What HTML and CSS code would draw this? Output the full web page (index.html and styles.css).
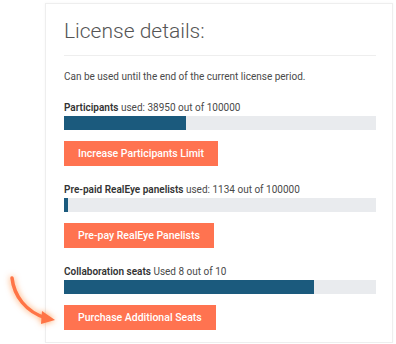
FILE: index.html
```html
<!DOCTYPE html>
<html lang="en">
<head>
    <meta charset="UTF-8">
    <meta name="viewport" content="width=device-width, initial-scale=1.0">
    <title>License details</title>
    <link rel="stylesheet" href="styles.css">
</head>
<body>

    <div class="page">
        <svg class="arrow" width="60" height="60" viewBox="0 0 60 60">
            <path d="M12 16 C14 34 26 50 46 56" fill="none" stroke="#ff7446" stroke-width="3.5" stroke-linecap="round"/>
            <path d="M42 49 L55 58 L41 62 Z" fill="#ff7446"/>
        </svg>

        <div class="card">
            <h1>License details:</h1>
            <p class="note">Can be used until the end of the current license period.</p>

            <div class="limit">
                <div class="label"><b>Participants</b> used: 38950 out of 100000</div>
                <div class="bar"><div class="fill" style="width: 38.95%"></div></div>
                <button>Increase Participants Limit</button>
            </div>

            <div class="limit">
                <div class="label"><b>Pre-paid RealEye panelists</b> used: 1134 out of 100000</div>
                <div class="bar"><div class="fill" style="width: 1.134%"></div></div>
                <button>Pre-pay RealEye Panelists</button>
            </div>

            <div class="limit">
                <div class="label"><b>Collaboration seats</b> Used 8 out of 10</div>
                <div class="bar"><div class="fill" style="width: 80%"></div></div>
                <button>Purchase Additional Seats</button>
            </div>
        </div>
    </div>

</body>
</html>
```

FILE: styles.css
```css
body {
    margin: 0;
    background: #ffffff;
    font-family: 'Roboto', 'Liberation Sans', sans-serif;
    color: #4a4a4a;
}

.page {
    position: relative;
    padding: 3px 3px 0 45px;
}

.card {
    border: 1px solid #eeeeee;
    padding: 15px 16px 12px 18px;
    height: 340px;
    box-sizing: border-box;
    box-shadow: 0 0 3px rgba(0, 0, 0, 0.04);
}

h1 {
    margin: 0;
    font-size: 21px;
    font-weight: 300;
    color: #555;
    padding-bottom: 12px;
    border-bottom: 1px solid #eeeeee;
}

.note {
    margin: 15px 0 19px;
    font-size: 10px;
}

.limit {
    margin-bottom: 17px;
}

.label {
    font-size: 10px;
    line-height: 13px;
    margin-bottom: 2px;
}

.label b {
    font-weight: 600;
    color: #333;
}

.bar {
    height: 14px;
    background: #e9ebee;
}

.fill {
    height: 100%;
    min-width: 3px;
    background: #1b5a7d;
}

button {
    margin-top: 11px;
    height: 25px;
    padding: 0 14px;
    border: none;
    background: #ff7350;
    color: #fff;
    font-family: inherit;
    font-size: 10.5px;
    font-weight: 500;
    cursor: pointer;
}

.arrow {
    position: absolute;
    left: 0;
    top: 262px;
    overflow: visible;
    filter: drop-shadow(0 0 3px rgba(255, 140, 60, 0.85));
}
```
